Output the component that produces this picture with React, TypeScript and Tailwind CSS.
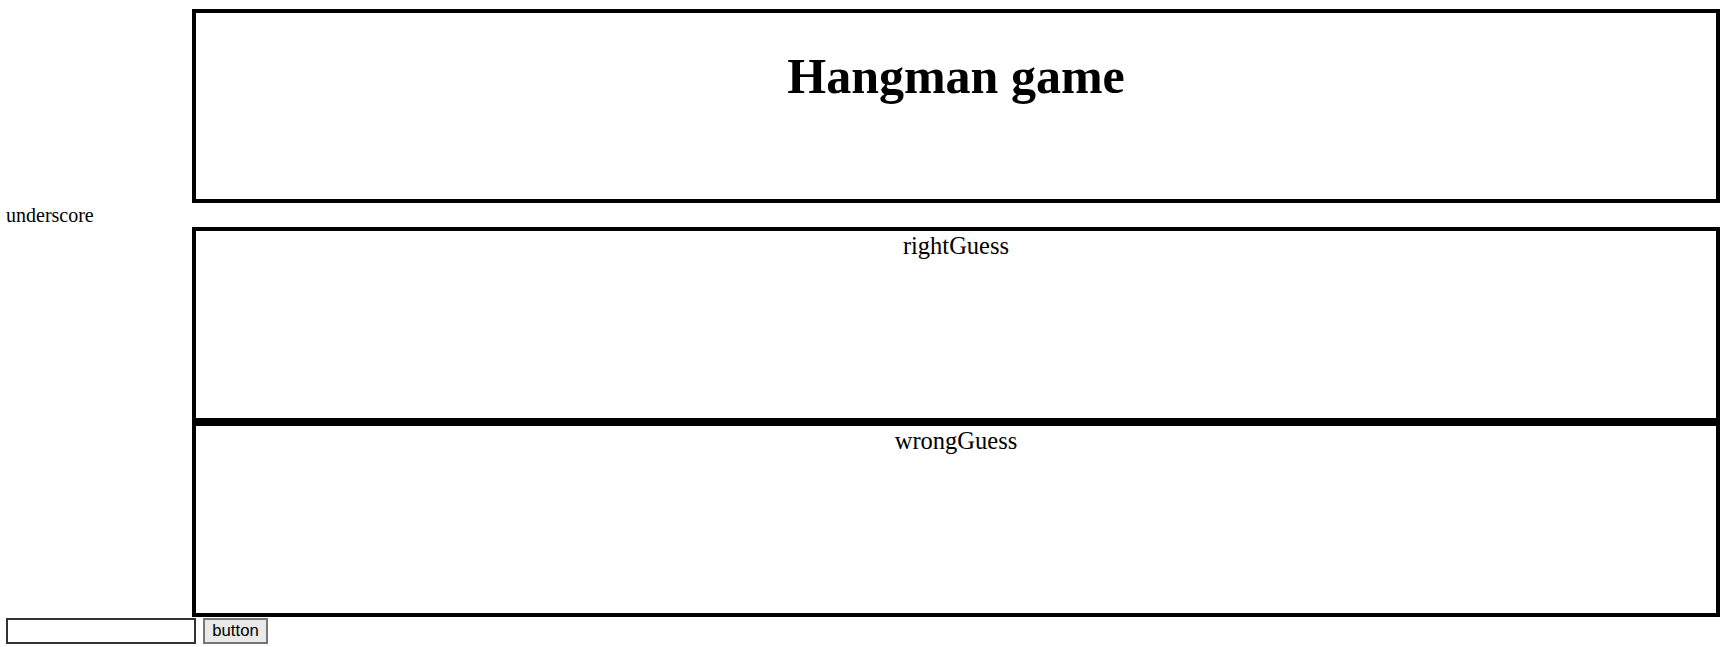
import React from "react";

export default function App() {
  return (
    <div className="w-[1732px] h-[647px] bg-white text-black font-['Liberation_Serif',serif] overflow-hidden">
      <div className="pt-[9px] pl-[192px]">
        <div className="w-[1528px] h-[194px] border-4 border-black text-center">
          <h1 className="mt-[35px] text-[50px] font-bold leading-[56px]">Hangman game</h1>
        </div>
      </div>
      <div className="h-[24px] pl-[6px] pt-[1px] text-[20px] leading-[23px]">underscore</div>
      <div className="pl-[192px]">
        <div className="w-[1528px] h-[195px] border-4 border-black text-center text-[24.5px] leading-[28px] pt-[1px]">
          rightGuess
        </div>
        <div className="w-[1528px] h-[195px] border-4 border-black text-center text-[24.5px] leading-[28px] pt-[1px]">
          wrongGuess
        </div>
      </div>
      <div className="flex items-start pt-[1px] pl-[6px] gap-[7px]">
        <input
          type="text"
          className="w-[190px] h-[26px] border-2 border-[#333] bg-white outline-none px-[2px] text-[16px] font-['Liberation_Sans',sans-serif]"
        />
        <button className="w-[65px] h-[26px] border-2 border-[#767676] bg-[#e9e9e9] text-[16.7px] leading-[20px] font-['Liberation_Sans',Arial,sans-serif] text-black">
          button
        </button>
      </div>
    </div>
  );
}
